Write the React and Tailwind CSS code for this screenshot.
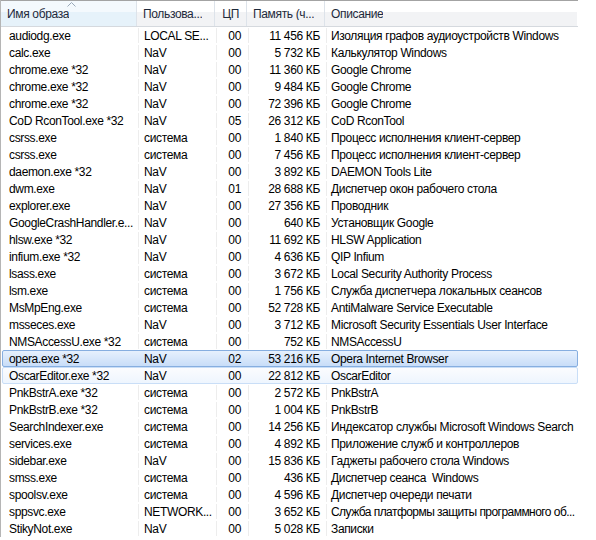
import React from 'react';

const rows = [
  ['audiodg.exe', 'LOCAL SE...', '00', '11 456 КБ', 'Изоляция графов аудиоустройств Windows'],
  ['calc.exe', 'NaV', '00', '5 732 КБ', 'Калькулятор Windows'],
  ['chrome.exe *32', 'NaV', '00', '11 360 КБ', 'Google Chrome'],
  ['chrome.exe *32', 'NaV', '00', '9 484 КБ', 'Google Chrome'],
  ['chrome.exe *32', 'NaV', '00', '72 396 КБ', 'Google Chrome'],
  ['CoD RconTool.exe *32', 'NaV', '05', '26 312 КБ', 'CoD RconTool'],
  ['csrss.exe', 'система', '00', '1 840 КБ', 'Процесс исполнения клиент-сервер'],
  ['csrss.exe', 'система', '00', '7 456 КБ', 'Процесс исполнения клиент-сервер'],
  ['daemon.exe *32', 'NaV', '00', '3 892 КБ', 'DAEMON Tools Lite'],
  ['dwm.exe', 'NaV', '01', '28 688 КБ', 'Диспетчер окон рабочего стола'],
  ['explorer.exe', 'NaV', '00', '27 356 КБ', 'Проводник'],
  ['GoogleCrashHandler.e...', 'NaV', '00', '640 КБ', 'Установщик Google'],
  ['hlsw.exe *32', 'NaV', '00', '11 692 КБ', 'HLSW Application'],
  ['infium.exe *32', 'NaV', '00', '4 636 КБ', 'QIP Infium'],
  ['lsass.exe', 'система', '00', '3 672 КБ', 'Local Security Authority Process'],
  ['lsm.exe', 'система', '00', '1 756 КБ', 'Служба диспетчера локальных сеансов'],
  ['MsMpEng.exe', 'система', '00', '52 728 КБ', 'AntiMalware Service Executable'],
  ['msseces.exe', 'NaV', '00', '3 712 КБ', 'Microsoft Security Essentials User Interface'],
  ['NMSAccessU.exe *32', 'система', '00', '752 КБ', 'NMSAccessU'],
  ['opera.exe *32', 'NaV', '02', '53 216 КБ', 'Opera Internet Browser'],
  ['OscarEditor.exe *32', 'NaV', '00', '22 812 КБ', 'OscarEditor'],
  ['PnkBstrA.exe *32', 'система', '00', '2 572 КБ', 'PnkBstrA'],
  ['PnkBstrB.exe *32', 'система', '00', '1 004 КБ', 'PnkBstrB'],
  ['SearchIndexer.exe', 'система', '00', '14 256 КБ', 'Индексатор службы Microsoft Windows Search'],
  ['services.exe', 'система', '00', '4 892 КБ', 'Приложение служб и контроллеров'],
  ['sidebar.exe', 'NaV', '00', '15 836 КБ', 'Гаджеты рабочего стола Windows'],
  ['smss.exe', 'система', '00', '436 КБ', 'Диспетчер сеанса  Windows'],
  ['spoolsv.exe', 'система', '00', '4 596 КБ', 'Диспетчер очереди печати'],
  ['sppsvc.exe', 'NETWORK...', '00', '3 652 КБ', 'Служба платформы защиты программного об...', true],
  ['StikyNot.exe', 'NaV', '00', '5 028 КБ', 'Записки'],
];

const cols = 'grid grid-cols-[136px_78px_32px_78px_252px]';

const HeaderCell = ({ children, sorted, right, last }) => (
  <div className={`relative h-full flex items-center ${right ? 'justify-end pr-[7px]' : 'pl-[6px]'} ${last ? '' : 'border-r border-[#dde3ea]'} ${sorted ? 'bg-[linear-gradient(#f4f9fd_0%,#f4f9fd_45%,#e6f2fa_45%,#e6f2fa_100%)]' : 'bg-[linear-gradient(#ffffff_0%,#ffffff_45%,#f2f3f5_45%,#f2f3f5_100%)]'}`}>
    {sorted && (
      <svg className="absolute left-[66px] top-[1px]" width="9" height="5" viewBox="0 0 9 5">
        <path d="M0.5 4.5 L4.5 0.5 L8.5 4.5" fill="none" stroke="#9aa9b9" strokeWidth="1" />
      </svg>
    )}
    <span className="overflow-hidden whitespace-pre">{children}</span>
  </div>
);

const Row = ({ r, state }) => {
  const box =
    state === 'sel'
      ? 'bg-[linear-gradient(#e6f0fd,#c8ddf8)] border border-[#86aee0] rounded-[2px]'
      : state === 'hover'
      ? 'bg-[linear-gradient(#fbfcfe,#eef5fe)] border border-[#c9def7] rounded-[2px]'
      : 'border border-transparent';
  const sep = state ? 'border-transparent' : 'border-[#ededed]';
  return (
    <div className={`${cols} h-[17px] ml-[1px] w-[576px] ${box}`}>
      <div className={`flex items-center pl-[6px] border-r overflow-hidden ${sep}`}><span className="whitespace-pre">{r[0]}</span></div>
      <div className={`flex items-center pl-[5px] border-r overflow-hidden ${sep}`}><span className="whitespace-pre">{r[1]}</span></div>
      <div className={`flex items-center justify-end pr-[7px] border-r ${sep}`}>{r[2]}</div>
      <div className={`flex items-center justify-end pr-[6px] border-r ${sep}`}><span className="whitespace-pre">{r[3]}</span></div>
      <div className="flex items-center pl-[4px] overflow-hidden">
        <span className={`whitespace-pre ${r[5] ? 'tracking-[-0.55px]' : ''}`}>{r[4]}</span>
      </div>
    </div>
  );
};

export default function App() {
  return (
    <div className="w-[596px] h-[540px] bg-white overflow-hidden text-[12px] leading-none tracking-[-0.35px] text-black font-['Liberation_Sans',Arial,sans-serif]">
      <div className="w-[578px] border-l border-[#b5b5b5]">
        <div className={`${cols} h-[27px] border-t border-[#a3a3a3] border-b border-b-[#d5d9de] text-[#1e2a3b] w-[577px]`}>
          <HeaderCell sorted>Имя образа</HeaderCell>
          <HeaderCell>Пользова...</HeaderCell>
          <HeaderCell right>ЦП</HeaderCell>
          <HeaderCell>Память (ч...</HeaderCell>
          <HeaderCell last>Описание</HeaderCell>
        </div>
        <div className="flex flex-col">
          {rows.map((r, i) => (
            <Row key={i} r={r} state={i === 19 ? 'sel' : i === 20 ? 'hover' : null} />
          ))}
        </div>
      </div>
    </div>
  );
}
